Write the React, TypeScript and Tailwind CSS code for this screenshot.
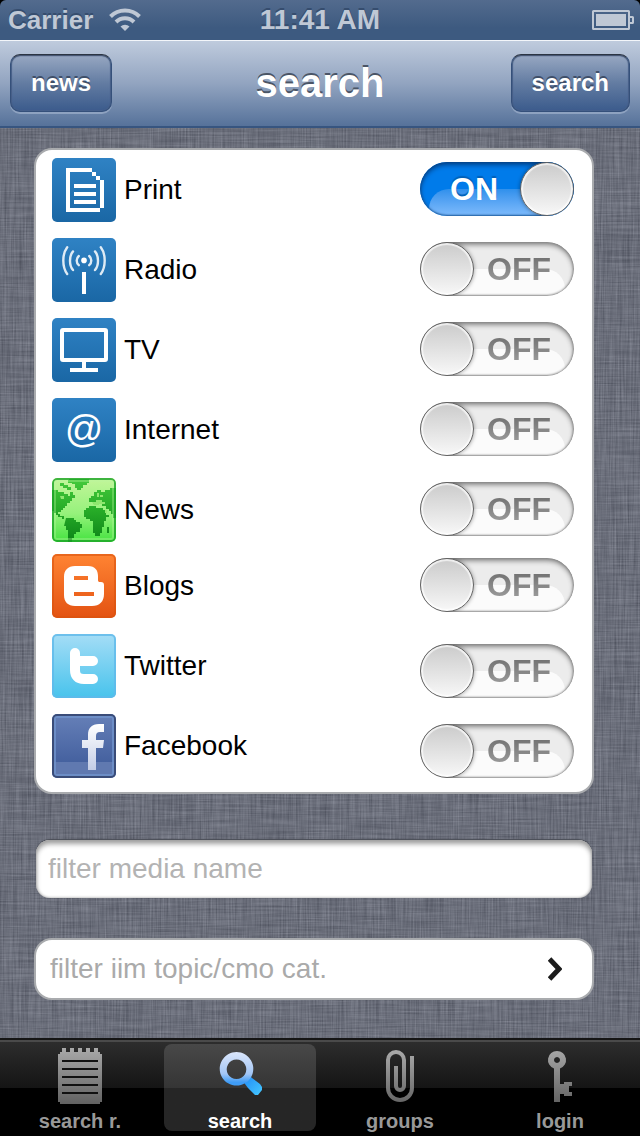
import { useState } from 'react';
import type { ReactNode } from 'react';

const BlueTile = ({ children }: { children: ReactNode }) => (
  <svg viewBox="0 0 32 32" className="size-16 shrink-0 rounded-[5px]" aria-hidden="true">
    <defs>
      <linearGradient id="blueTile" x1="0" y1="0" x2="0" y2="1">
        <stop offset="0" stopColor="#2f82c4" />
        <stop offset="1" stopColor="#1a67a5" />
      </linearGradient>
    </defs>
    <rect width="32" height="32" fill="url(#blueTile)" />
    {children}
  </svg>
);

const PrintIcon = () => (
  <BlueTile>
    <g fill="#fff" shapeRendering="crispEdges">
      <path d="M7 5h13v2H9v18h15v2H7zM24 11h2v14h-2z" />
      <path d="M20 7h2v2h-2zM22 9h2v2h-2z" />
      <path d="M11 13h11v2H11zM11 17h11v2H11zM11 21h11v2H11z" />
    </g>
  </BlueTile>
);

const RadioIcon = () => (
  <BlueTile>
    <g fill="none" stroke="#fff" strokeOpacity=".85" strokeWidth="1.2" strokeLinecap="round">
      <path d="M7.600 4.600C5 8 5 14.500 7.600 18M24.400 4.600C27 8 27 14.500 24.400 18" />
      <path d="M10.500 6.700C8.500 9 8.500 13.700 10.500 16M21.500 6.700C23.500 9 23.500 13.700 21.500 16" />
      <path d="M13.400 9C12 10.200 12 12.400 13.400 13.600M18.600 9C20 10.200 20 12.400 18.600 13.600" />
    </g>
    <circle cx="16" cy="11.200" r="1.400" fill="#fff" />
    <path d="M15 17h2v11h-2z" fill="#fff" />
  </BlueTile>
);

const TvIcon = () => (
  <BlueTile>
    <rect x="5" y="6" width="22" height="15" rx=".5" fill="none" stroke="#fff" strokeWidth="2" />
    <path d="M15 22h2v3h6v2H9v-2h6z" fill="#fff" />
  </BlueTile>
);

const InternetIcon = () => (
  <BlueTile>
    <text x="16" y="22" textAnchor="middle" fontSize="19" fill="#fff" fontFamily="Liberation Sans, sans-serif">
      @
    </text>
  </BlueTile>
);

const NewsIcon = () => (
  <svg viewBox="0 0 64 64" className="size-16 shrink-0 rounded-[5px]" aria-hidden="true">
    <defs>
      <linearGradient id="sea" x1="0" y1="0" x2="0" y2="1">
        <stop offset="0" stopColor="#c3f59a" />
        <stop offset=".55" stopColor="#96f27c" />
        <stop offset="1" stopColor="#45e340" />
      </linearGradient>
      <linearGradient id="land" gradientUnits="userSpaceOnUse" x1="0" y1="0" x2="0" y2="64">
        <stop offset="0" stopColor="#45cb3c" />
        <stop offset=".5" stopColor="#27ac28" />
        <stop offset="1" stopColor="#0c8417" />
      </linearGradient>
    </defs>
    <rect width="64" height="64" fill="url(#sea)" />
    <g fill="url(#land)">
      {/* Americas */}
      <path d="M0 12h6v2h6v2h4v2h2v-4h3v3h2v3h-3v3h-2v2h-3v3h-2v2h-2v2h-2v2H6v2h2v2h4v3h-2v-2H6v-2H4v-2H2v-2H0z" />
      <path d="M8 5h4v2h4v2h3v3h-4v-2h-4V8H8zM16 2h5v3h-5z" />
      <path d="M14 40h8v2h2v2h4v2h2v4h-2v4h-4v2h-2v4h-2v4h-4V52h-2v-4h-2z" />
      <path d="M17 1h20v4h-2v2h-4v3h-2v2h-4v-2h-2V6h-3V4h-3z" />
      {/* Europe, Asia and Africa */}
      <path d="M37 24v-4h2v-2h3v-4h3v-2h4v2h4v-2h5v-2h6v30h-3v-4h-2v-3h-2v-2h-3v-3h-4v-2h-3v-2h-4v2h-2v-2z" />
      <path d="M37 28h7v2h7v2h3v5h3v2h-3v4h-2v6h-2v6h-2v3h-5v-3h-2V43h-3v-2h-4v-2h-2v-7h2v-2h3z" />
      <path d="M55 49h2v6h-2z" />
    </g>
    <path d="M40 24h4v-2h6v2h3v2h-6v1h-5zM45 15h2v4h-2zM48 17h3v2h-3zM8 18h4v3h-3zM53 32h2v3h-2z" fill="#8fe76f" />
    <rect x="1" y="1" width="62" height="62" rx="4" fill="none" stroke="#1da428" strokeOpacity=".8" strokeWidth="2" />
    <rect x="3" y="3" width="58" height="58" rx="2" fill="none" stroke="#b9f7a0" strokeOpacity=".35" strokeWidth="2" />
  </svg>
);

const BlogsIcon = () => (
  <svg viewBox="0 0 32 32" className="size-16 shrink-0 rounded-[5px]" aria-hidden="true">
    <defs>
      <linearGradient id="blogs" x1="0" y1="0" x2="0" y2="1">
        <stop offset="0" stopColor="#ff8433" />
        <stop offset="1" stopColor="#e35212" />
      </linearGradient>
    </defs>
    <rect width="32" height="32" fill="url(#blogs)" />
    <rect x=".5" y=".5" width="31" height="31" rx="2" fill="none" stroke="#d8530f" strokeOpacity=".6" />
    <path
      fill="#fff"
      fillRule="evenodd"
      d="M11.500 6H18c3.600 0 5 2.200 5 5v2c0 .7.300 1 1 1h.5c1 0 1.500.5 1.500 1.500V20c0 3.800-2.200 6-6 6h-8.500C8 26 6 24 6 20.500v-9C6 8 8 6 11.500 6zM11 11v2h7v-2zM11 19v2h10v-2z"
    />
  </svg>
);

const TwitterIcon = () => (
  <svg viewBox="0 0 32 32" className="size-16 shrink-0 rounded-[5px]" aria-hidden="true">
    <defs>
      <linearGradient id="twitter" x1="0" y1="0" x2="0" y2="1">
        <stop offset="0" stopColor="#a5ddf6" />
        <stop offset="1" stopColor="#47c3ec" />
      </linearGradient>
    </defs>
    <rect width="32" height="32" fill="url(#twitter)" />
    <rect x=".5" y=".5" width="31" height="31" rx="2" fill="none" stroke="#5fb9ea" strokeOpacity=".8" />
    <path
      d="M11.500 9.500V18q0 4.500 4.500 4.500h4.500M12 13.500h8.500"
      fill="none"
      stroke="#fff"
      strokeWidth="5"
      strokeLinecap="round"
    />
  </svg>
);

const FacebookIcon = () => (
  <svg viewBox="0 0 32 32" className="size-16 shrink-0 rounded-[5px]" aria-hidden="true">
    <defs>
      <linearGradient id="facebook" x1="0" y1="0" x2="0" y2="1">
        <stop offset="0" stopColor="#6680b8" />
        <stop offset="1" stopColor="#3a5797" />
      </linearGradient>
      <linearGradient id="facebookMark" x1="0" y1="0" x2="0" y2="1">
        <stop offset="0" stopColor="#fff" />
        <stop offset="1" stopColor="#c3cde6" />
      </linearGradient>
    </defs>
    <rect width="32" height="32" fill="url(#facebook)" />
    <rect y="24" width="32" height="8" fill="#6079b0" />
    <rect x="1.500" y="1.500" width="29" height="29" fill="none" stroke="#7193cc" strokeOpacity=".8" />
    <rect x=".5" y=".5" width="31" height="31" rx="2" fill="none" stroke="#3a4c78" />
    <path
      fill="url(#facebookMark)"
      d="M26 5h-2.500C19.800 5 18 7 18 10.500V13h-3v4h3v11h4V17h3.500l.5-4h-4v-2c0-1.400.6-2 2-2h2z"
    />
  </svg>
);

const mediaItems = [
  { id: 'print', label: 'Print', Icon: PrintIcon, row: 'mt-0', offset: 'mt-1' },
  { id: 'radio', label: 'Radio', Icon: RadioIcon, row: 'mt-4', offset: 'mt-1' },
  { id: 'tv', label: 'TV', Icon: TvIcon, row: 'mt-4', offset: 'mt-1' },
  { id: 'internet', label: 'Internet', Icon: InternetIcon, row: 'mt-4', offset: 'mt-1' },
  { id: 'news', label: 'News', Icon: NewsIcon, row: 'mt-4', offset: 'mt-1' },
  { id: 'blogs', label: 'Blogs', Icon: BlogsIcon, row: 'mt-3', offset: 'mt-1' },
  { id: 'twitter', label: 'Twitter', Icon: TwitterIcon, row: 'mt-4', offset: 'mt-[10px]' },
  { id: 'facebook', label: 'Facebook', Icon: FacebookIcon, row: 'mt-4', offset: 'mt-[10px]' },
];

const Switch = ({ id, checked, onChange }: { id: string; checked: boolean; onChange: () => void }) => (
  <span
    className={`relative flex h-[54px] w-[154px] items-center overflow-hidden rounded-full text-[32px] leading-8 font-bold ${
      checked ? 'bg-[#007bea] pl-[30px]' : 'bg-[#ececec] pl-[67px]'
    }`}
  >
    {/* gloss on the lower half */}
    <span
      className={`absolute top-[27px] left-[9px] h-[54px] w-[136px] rounded-t-[20px] ${
        checked ? 'bg-linear-to-b from-[#2f90ec] to-[#8cc4ff] to-60%' : 'bg-[#fbfbfb]'
      }`}
    />
    <span
      className={`relative ${
        checked
          ? 'text-white [text-shadow:0_-2px_1px_#0060b8]'
          : 'bg-linear-to-b from-[#6c6c6c] to-[#a0a0a0] bg-clip-text text-transparent'
      }`}
    >
      {checked ? 'ON' : 'OFF'}
    </span>
    <span
      className={`absolute inset-0 rounded-full ${
        checked
          ? 'shadow-[inset_0_3px_5px_#00428a,inset_0_0_2px_1px_#1f5e9f]'
          : 'shadow-[inset_0_3px_5px_#8a8a8a,inset_0_0_2px_1px_#8f8f8f]'
      }`}
    />
    <span
      className={`absolute top-0 size-[54px] rounded-full border border-[#626262] bg-linear-to-b from-[#cbcbcb] to-[#f8f8f8] shadow-[inset_0_0_1px_2px_#ffffffb0,0_0_4px_#0006] ${
        checked ? 'right-0' : 'left-0'
      }`}
    />
    <input
      id={id}
      type="checkbox"
      role="switch"
      checked={checked}
      onChange={onChange}
      className="absolute inset-0 cursor-pointer appearance-none rounded-full"
    />
  </span>
);

const NavButton = ({ children }: { children: ReactNode }) => (
  <button
    type="button"
    className="block h-[58px] rounded-[10px] border border-[#35507a] border-t-[#2c3543] bg-linear-to-b from-[#98a8c2] via-[#637ca2] to-[#3b5b8c] px-5 text-2xl font-bold text-white shadow-[inset_0_1px_1px_#46556f,inset_0_0_1px_1px_#46608a,0_2px_0_#8ea2c0] [text-shadow:0_-2px_0_#3f4f69]"
  >
    {children}
  </button>
);

// Woven linen behind the form
const Linen = () => (
  <svg className="absolute inset-0 size-full" aria-hidden="true">
    <filter id="weft" x="0" y="0" width="100%" height="100%" colorInterpolationFilters="sRGB">
      <feTurbulence type="fractalNoise" baseFrequency="0.02 0.6" numOctaves="3" seed="4" />
      <feColorMatrix values="1.200 0 0 0 -.14  1.200 0 0 0 -.13  1.200 0 0 0 -.08  0 0 0 0 1" />
    </filter>
    <filter id="warp" x="0" y="0" width="100%" height="100%" colorInterpolationFilters="sRGB">
      <feTurbulence type="fractalNoise" baseFrequency="0.6 0.02" numOctaves="3" seed="9" />
      <feColorMatrix values="1.200 0 0 0 -.14  1.200 0 0 0 -.13  1.200 0 0 0 -.08  0 0 0 0 1" />
    </filter>
    <rect width="100%" height="100%" filter="url(#weft)" opacity=".14" />
    <rect width="100%" height="100%" filter="url(#warp)" opacity=".14" />
  </svg>
);

const NotebookIcon = () => (
  <svg viewBox="0 0 44 56" className="h-14 w-11" aria-hidden="true">
    <path
      fill="url(#tabGray)"
      d="M2 4h2V0h4v4h4V0h4v4h4V0h4v4h4V0h4v4h4V0h4v4h2v2h2v48h-2v2H2v-2H0V6h2z"
    />
    <path d="M4 12h36v2H4zM4 20h36v2H4zM4 28h36v2H4zM4 36h36v2H4zM4 44h36v2H4z" fill="#111" />
  </svg>
);

const MagnifierIcon = () => (
  <svg viewBox="0 0 44 56" className="h-14 w-11" aria-hidden="true">
    <defs>
      <linearGradient id="lens" x1="0" y1="0" x2="0" y2="1">
        <stop offset="0" stopColor="#dbe6fb" />
        <stop offset=".65" stopColor="#a3c6f5" />
        <stop offset=".9" stopColor="#3f9cf5" />
      </linearGradient>
      <linearGradient id="handle" x1="0" y1="0" x2="1" y2="1">
        <stop offset="0" stopColor="#1d84f5" />
        <stop offset="1" stopColor="#45c8ff" />
      </linearGradient>
    </defs>
    <path d="M24 32l6-6 4 4 8 6 2 3v3l-4 5h-3l-7-7z" fill="url(#handle)" />
    <path
      fill="url(#lens)"
      fillRule="evenodd"
      d="M18.500 4a16.800 16.800 0 1 0 .01 0zM18.500 11.500a9.800 9.800 0 1 1-.01 0z"
    />
  </svg>
);

const PaperclipIcon = () => (
  <svg viewBox="-8 -2 44 56" className="h-14 w-11" aria-hidden="true">
    <path
      d="M26 6v32a12 12 0 0 1-24 0V10a8 8 0 0 1 16 0v26a4 4 0 0 1-8 0V16"
      fill="none"
      stroke="url(#tabGray)"
      strokeWidth="4"
    />
  </svg>
);

const KeyIcon = () => (
  <svg viewBox="0 0 44 56" className="h-14 w-11" aria-hidden="true">
    <path
      fill="url(#tabGray)"
      fillRule="evenodd"
      d="M19 3a9 9 0 0 1 3 17.500V36h4v-2h8v4h-3v6h3v4h-8v-2h-4v8h-6V20.500A9 9 0 0 1 19 3zM19 9a3 3 0 1 0 .01 0z"
    />
  </svg>
);

const tabs = [
  { label: 'search r.', href: '#results', Icon: NotebookIcon },
  { label: 'search', href: '#search', Icon: MagnifierIcon },
  { label: 'groups', href: '#groups', Icon: PaperclipIcon },
  { label: 'login', href: '#login', Icon: KeyIcon },
];

const App = () => {
  const [enabled, setEnabled] = useState<Record<string, boolean>>({ print: true });
  const [mediaName, setMediaName] = useState('');

  const toggle = (id: string) => setEnabled({ ...enabled, [id]: !enabled[id] });

  return (
    <div className="flex min-h-screen flex-col bg-black font-['Liberation_Sans',Arial,sans-serif]">
      {/* Status bar */}
      <div className="grid h-10 grid-cols-[1fr_auto_1fr] items-center rounded-t-md bg-linear-to-b from-[#536b8e] to-[#3d5a80] to-70% px-[6px] font-bold text-[#bfc8d5] [text-shadow:0_-2px_0_#364d6e]">
        <div className="flex items-center gap-4 pl-[2px]">
          <span className="text-[26px] leading-10">Carrier</span>
          <svg viewBox="0 0 32 24" className="h-6 w-8" aria-label="Wi-Fi" role="img">
            <g fill="none" stroke="#bfc8d5" strokeWidth="4">
              <path d="M1.500 8.500a20.500 20.500 0 0 1 29 0" />
              <path d="M7 14a12.700 12.700 0 0 1 18 0" />
            </g>
            <path d="M11.500 18.500a6.500 6.500 0 0 1 9 0L16 23z" fill="#bfc8d5" />
          </svg>
        </div>
        <span className="text-[28px] leading-10">11:41 AM</span>
        <svg viewBox="0 0 42 20" className="h-5 w-[42px] justify-self-end" aria-label="Battery" role="img">
          <path
            fill="#bfc8d5"
            fillRule="evenodd"
            d="M1.500 0h35Q38 0 38 1.500V6h2.500Q42 6 42 7.500v5q0 1.500-1.500 1.500H38v4.500q0 1.500-1.500 1.500h-35Q0 20 0 18.500v-17Q0 0 1.500 0zM2 2v16h34V2zM38 8v4h2V8zM4 4h30v12H4z"
          />
        </svg>
      </div>

      {/* Navigation bar */}
      <header className="grid h-[88px] grid-cols-[1fr_auto_1fr] items-center border-t border-b-2 border-t-[#f3f6fa] border-b-[#375580] bg-linear-to-b from-[#bfcbdd] via-[#92a4c0] to-[#56729a] px-[10px] pb-[2px]">
        <div>
          <NavButton>news</NavButton>
        </div>
        <h1 className="text-[40px] leading-[48px] font-bold text-white [text-shadow:0_-2px_0_#4a5566]">search</h1>
        <div className="justify-self-end">
          <NavButton>search</NavButton>
        </div>
      </header>

      <main className="relative flex-1 bg-[#686c78] pt-5 pr-[46px] pb-[38px] pl-[34px]">
        <Linen />
        <form className="relative text-[28px] leading-8" onSubmit={(e) => e.preventDefault()}>
          <div className="rounded-[18px] border-2 border-[#a9abae] bg-white pt-2 pr-[18px] pb-[14px] pl-4 text-black">
            {mediaItems.map(({ id, label, Icon, row, offset }) => (
              <div key={id} className={`flex h-16 items-start justify-between ${row}`}>
                <label htmlFor={id} className="flex h-16 items-center gap-2">
                  <Icon />
                  {label}
                </label>
                <div className={offset}>
                  <Switch id={id} checked={!!enabled[id]} onChange={() => toggle(id)} />
                </div>
              </div>
            ))}
          </div>

          <div className="mt-[46px] px-[2px]">
            <input
              type="text"
              aria-label="filter media name"
              placeholder="filter media name"
              value={mediaName}
              onChange={(e) => setMediaName(e.target.value)}
              className="block h-[58px] w-full rounded-[14px] bg-white px-3 text-black shadow-[inset_0_4px_5px_#a0a0a0,inset_0_0_3px_#999,0_-1px_1px_#4b4e57] placeholder:text-[#b3b3b3] placeholder:opacity-100"
            />
          </div>

          <button
            type="button"
            className="mt-10 flex h-[62px] w-full items-center justify-between rounded-[18px] border-2 border-[#a9abae] bg-white pr-[30px] pl-[14px] text-[#aaa]"
          >
            filter iim topic/cmo cat.
            <svg viewBox="0 0 14 24" className="h-6 w-[14px]" aria-hidden="true">
              <path d="M1.500 2L11 12 1.500 22" fill="none" stroke="#1c1c1c" strokeWidth="5" />
            </svg>
          </button>
        </form>
      </main>

      {/* Tab bar */}
      <nav className="grid grid-cols-4 border-t-2 border-[#151515] bg-linear-to-b from-[#2e2e2e] from-0% via-[#151515] via-50% to-black to-50% pt-1 pb-[5px] shadow-[inset_0_2px_0_#4a4a4a]">
        <svg className="absolute size-0" aria-hidden="true">
          <linearGradient id="tabGray" gradientUnits="userSpaceOnUse" x1="0" y1="0" x2="0" y2="56">
            <stop offset="0" stopColor="#a9a9a9" />
            <stop offset="1" stopColor="#626262" />
          </linearGradient>
        </svg>
        {tabs.map(({ label, href, Icon }) => (
          <a
            key={label}
            href={href}
            aria-current={label === 'search' ? 'page' : undefined}
            className={`mx-1 flex flex-col items-center gap-[7px] rounded-lg pt-1 text-xl leading-5 font-bold ${
              label === 'search'
                ? 'bg-linear-to-b from-[#484848] from-0% via-[#353535] via-50% to-[#262626] to-50% text-white'
                : 'text-[#999]'
            }`}
          >
            <Icon />
            {label}
          </a>
        ))}
      </nav>
    </div>
  );
};

export default App;
